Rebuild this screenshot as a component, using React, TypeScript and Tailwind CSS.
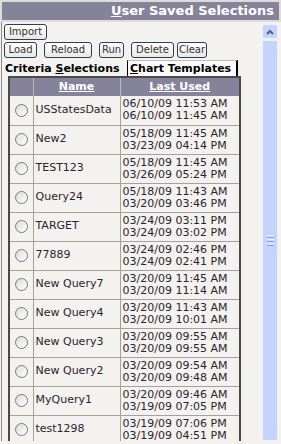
import React from "react";

interface Selection {
  name: string;
  used: string;
  saved: string;
}

const selections: Selection[] = [
  { name: "USStatesData", used: "06/10/09 11:53 AM", saved: "06/10/09 11:45 AM" },
  { name: "New2", used: "05/18/09 11:45 AM", saved: "03/23/09 04:14 PM" },
  { name: "TEST123", used: "05/18/09 11:45 AM", saved: "03/26/09 05:24 PM" },
  { name: "Query24", used: "05/18/09 11:43 AM", saved: "03/20/09 03:46 PM" },
  { name: "TARGET", used: "03/24/09 03:11 PM", saved: "03/24/09 03:02 PM" },
  { name: "77889", used: "03/24/09 02:46 PM", saved: "03/24/09 02:41 PM" },
  { name: "New Query7", used: "03/20/09 11:45 AM", saved: "03/20/09 11:14 AM" },
  { name: "New Query4", used: "03/20/09 11:43 AM", saved: "03/20/09 10:01 AM" },
  { name: "New Query3", used: "03/20/09 09:55 AM", saved: "03/20/09 09:55 AM" },
  { name: "New Query2", used: "03/20/09 09:54 AM", saved: "03/20/09 09:48 AM" },
  { name: "MyQuery1", used: "03/20/09 09:46 AM", saved: "03/19/09 07:05 PM" },
  { name: "test1298", used: "03/19/09 07:06 PM", saved: "03/19/09 04:51 PM" },
];

const btn =
  "h-[16px] border border-[#2c3e5c] rounded-[3px] bg-linear-to-b from-white to-[#e9e8e3] text-[10px] leading-[14px] text-[#333] text-center whitespace-nowrap";

const Radio = () => (
  <span className="block w-[13px] h-[13px] mx-auto rounded-full border border-[#737b85] bg-linear-to-br from-[#dcdcd6] to-white"></span>
);

const ScrollBar = () => (
  <div className="w-[16px] mt-[2px] mr-[3px] mb-[3px] flex flex-col">
    <div className="h-[15px] rounded-[2px] border border-[#eef2fd] bg-[#c4d4fc] flex items-center justify-center">
      <svg width="8" height="6" viewBox="0 0 8 6">
        <path d="M1 5 L4 2 L7 5" stroke="#4d6185" strokeWidth="2" fill="none" />
      </svg>
    </div>
    <div className="flex-1 mt-[1px] rounded-[2px] border border-[#eef2fd] bg-[#c4d4fc] flex flex-col items-center justify-center gap-[1px]">
      <span className="block w-[7px] h-[1px] bg-[#eef2fd]"></span>
      <span className="block w-[7px] h-[1px] bg-[#8ca6e6]"></span>
      <span className="block w-[7px] h-[1px] bg-[#eef2fd]"></span>
      <span className="block w-[7px] h-[1px] bg-[#8ca6e6]"></span>
      <span className="block w-[7px] h-[1px] bg-[#eef2fd]"></span>
      <span className="block w-[7px] h-[1px] bg-[#8ca6e6]"></span>
    </div>
  </div>
);

export default function App() {
  return (
    <div className="w-[281px] h-[444px] overflow-hidden bg-[#f4f2ee] font-['DejaVu_Sans',Verdana,sans-serif]">
      <div className="h-[22px] border-2 border-[#dedcd6] bg-[#85839a] text-right pr-[5px] text-[13px] leading-[18px] font-bold text-white whitespace-nowrap">
        <span className="underline">U</span>ser Saved Selections
      </div>
      <div className="flex h-[422px]">
        <div className="flex-1 h-[419px] ml-[1px] border-l border-[#8a8a8a] overflow-hidden">
          <div className="flex pl-[2px] pt-[2px]">
            <button className={`${btn} w-[43px] text-[#5a1040]`}>Import</button>
          </div>
          <div className="flex pl-[2px] pt-[2px]">
            <button className={`${btn} w-[33px]`}>Load</button>
            <button className={`${btn} w-[48px] ml-[7px]`}>Reload</button>
            <button className={`${btn} w-[25px] ml-[7px]`}>Run</button>
            <button className={`${btn} w-[43px] ml-[7px]`}>Delete</button>
            <button className={`${btn} w-[30px] ml-[3px]`}>Clear</button>
          </div>
          <div className="flex items-end h-[18px] pl-[3px] text-[11px] font-bold text-black whitespace-nowrap">
            <div className="w-[122px] leading-[15px]">
              Criteria <span className="underline">S</span>elections
            </div>
            <div className="h-[16px] w-[111px] overflow-hidden border-l border-r-2 border-t border-l-black border-r-black border-t-[#bbb] bg-[#fcfbf9] pl-[2px] leading-[15px]">
              <span className="underline">C</span>hart Templates
            </div>
          </div>
          <div className="ml-[6px] w-[233px] border-x-2 border-t-2 border-[#4a4a4a]">
            <table className="w-[229px] table-fixed border-collapse text-[11px] text-[#2b2230]">
              <colgroup>
                <col className="w-[23px]" />
                <col className="w-[87px]" />
                <col className="w-[119px]" />
              </colgroup>
              <thead>
                <tr className="h-[18px] bg-[#85839a] text-white font-bold">
                  <th></th>
                  <th className="border-l border-[#bab9c6] underline font-bold">Name</th>
                  <th className="border-l border-[#bab9c6] underline font-bold">Last Used</th>
                </tr>
              </thead>
              <tbody>
                {selections.map((item) => (
                  <tr key={item.name} className="h-[29px] border-b border-[#a3a19b] bg-[#f4f2ee]">
                    <td className="p-0">
                      <Radio />
                    </td>
                    <td className="border-l border-[#a3a19b] pl-[2px] whitespace-nowrap">{item.name}</td>
                    <td className="border-l border-[#a3a19b] pl-[2px] leading-[12px] whitespace-nowrap">
                      <div>{item.used}</div>
                      <div>{item.saved}</div>
                    </td>
                  </tr>
                ))}
              </tbody>
            </table>
          </div>
        </div>
        <ScrollBar />
      </div>
    </div>
  );
}
